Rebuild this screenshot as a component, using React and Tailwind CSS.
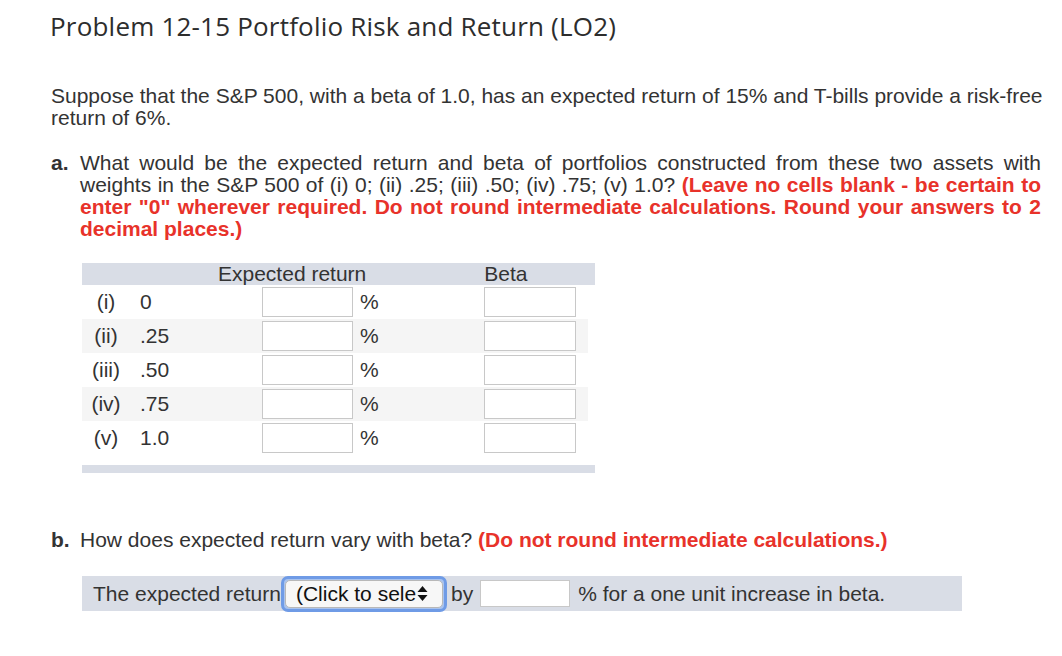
import React from "react";

const arial = { fontFamily: '"Liberation Sans", Arial, sans-serif' };

function Box({ w = "w-[91px]" }) {
  return <div className={`${w} h-[30px] bg-white border border-[#c8c8c8] shrink-0`} />;
}

const rows = [
  ["(i)", "0"],
  ["(ii)", ".25"],
  ["(iii)", ".50"],
  ["(iv)", ".75"],
  ["(v)", "1.0"],
];

const J = "block text-justify [text-align-last:justify] whitespace-nowrap";

export default function App() {
  return (
    <div className="w-[1062px] h-[656px] bg-white text-[#333333] overflow-hidden" style={arial}>
      <div className="pl-[50px] pr-[20px]">
        <h1
          className="pt-[10px] text-[26px] leading-[32px] tracking-[0.2px] text-[#2d2d2d]"
          style={{ fontFamily: '"Open Sans", Lato, sans-serif' }}
        >
          Problem 12-15 Portfolio Risk and Return (LO2)
        </h1>

        <p className="mt-[43px] w-[1000px] text-[21px] leading-[22px] pl-[1px]">
          Suppose that the S&amp;P 500, with a beta of 1.0, has an expected return of 15% and T-bills provide a risk-free
          <br />
          return of 6%.
        </p>

        <div className="mt-[23px] flex w-[992px] text-[21px] leading-[22px] pl-[1px]">
          <div className="w-[29px] shrink-0 font-bold">a.</div>
          <div className="w-[961px]">
            <span className={J}>
              What would be the expected return and beta of portfolios constructed from these two assets with
            </span>
            <span className={J}>
              weights in the S&amp;P 500 of (i) 0; (ii) .25; (iii) .50; (iv) .75; (v) 1.0?{" "}
              <span className="font-bold text-[#e8322a]">(Leave no cells blank - be certain to</span>
            </span>
            <span className={`${J} font-bold text-[#e8322a]`}>
              enter "0" wherever required. Do not round intermediate calculations. Round your answers to 2
            </span>
            <span className="block font-bold text-[#e8322a]">decimal places.)</span>
          </div>
        </div>

        <div className="mt-[23px] ml-[32px] w-[513px] text-[21px]">
          <div className="h-[22px] bg-[#d9dde6] flex items-center leading-[22px]">
            <span className="ml-[136px]">Expected return</span>
            <span className="ml-[118px]">Beta</span>
          </div>
          {rows.map(([a, b], i) => (
            <div
              key={a}
              className={`h-[34px] flex items-center ${i % 2 === 1 ? "bg-[#f5f5f5]" : "bg-white"} w-[506px]`}
            >
              <span className="w-[48px] text-center shrink-0">{a}</span>
              <span className="ml-[10px] w-[122px] shrink-0">{b}</span>
              <Box w="w-[91px]" />
              <span className="ml-[7px] w-[124px] shrink-0">%</span>
              <Box w="w-[92px]" />
            </div>
          ))}
          <div className="mt-[10px] h-[8px] bg-[#d9dde6]" />
        </div>

        <div className="mt-[56px] flex text-[21px] leading-[22px] pl-[1px]">
          <div className="w-[29px] shrink-0 font-bold">b.</div>
          <p>
            How does expected return vary with beta?{" "}
            <span className="font-bold text-[#e8322a]">(Do not round intermediate calculations.)</span>
          </p>
        </div>

        <div className="mt-[25px] ml-[32px] w-[880px] h-[35px] bg-[#d9dde6] flex items-center text-[21px]">
          <span className="ml-[11px] whitespace-nowrap">The expected return</span>
          <div className="ml-[0px] rounded-[7px] border-[3px] border-[#6f9be6] shrink-0 p-[1px] bg-[#a9c3ee]">
            <div className="w-[158px] h-[28px] rounded-[5px] bg-[#f7f7f7] border border-[#b8b8b8] flex items-center pl-[10px] text-[#111] overflow-hidden">
              <span className="leading-none whitespace-nowrap">(Click to sele</span>
              <svg width="11" height="17" viewBox="0 0 11 17" className="ml-[1px] shrink-0">
                <path d="M5.5 1 L10.5 7 L0.5 7 Z" fill="#111" />
                <path d="M5.5 16 L10.5 10 L0.5 10 Z" fill="#111" />
              </svg>
            </div>
          </div>
          <span className="ml-[4px]">by</span>
          <div className="ml-[7px] w-[90px] h-[27px] bg-white border border-[#c8c8c8] shrink-0" />
          <span className="ml-[8px] whitespace-nowrap">% for a one unit increase in beta.</span>
        </div>
      </div>
    </div>
  );
}
